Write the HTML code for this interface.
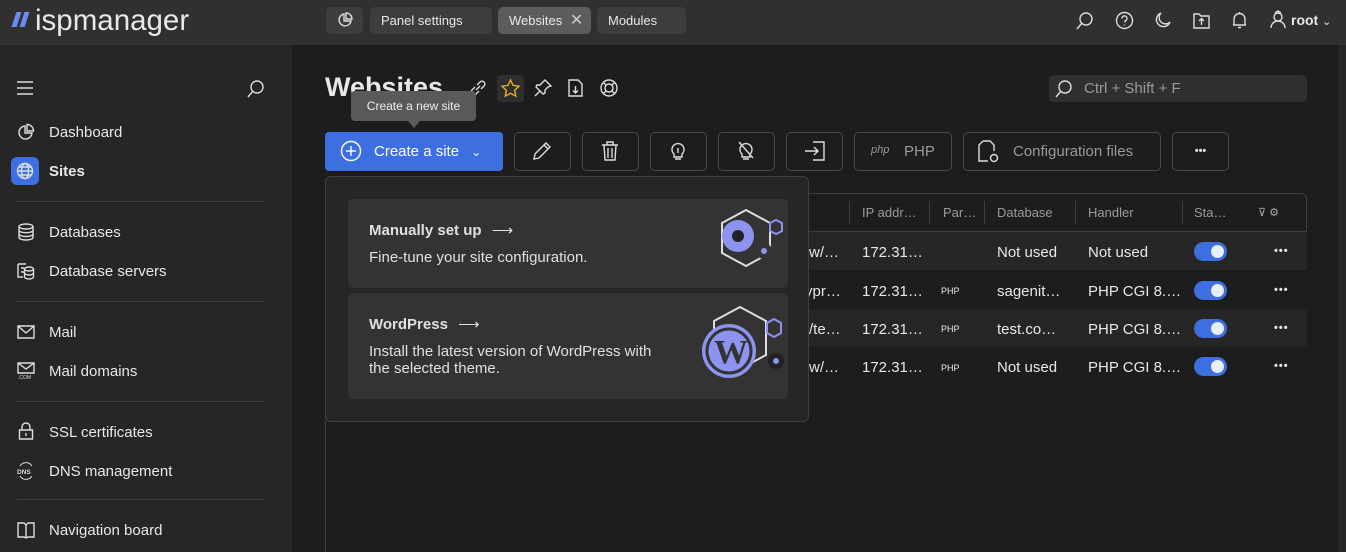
<!DOCTYPE html>
<html><head><meta charset="utf-8"><style>
*{box-sizing:border-box;margin:0;padding:0}
body{width:1346px;height:552px;overflow:hidden;background:#1d1d1d;font-family:"Liberation Sans",sans-serif;color:#e6e6e6;position:relative}
.abs{position:absolute}
.top{left:0;top:0;width:1346px;height:45px;background:#303030}
.tab{top:7px;height:27px;background:#3d3d3d;border-radius:5px;font-size:13px;line-height:27px;padding-left:11px;color:#e8e8e8}
.side{left:0;top:45px;width:292px;height:507px;background:#262626}
.nav{left:49px;font-size:15px;color:#e8e8e8}
.ic{left:17px;width:18px;height:18px}
.sep{left:17px;width:247px;height:1px;background:#3e3e3e}
.btn{top:132px;height:39px;border:1px solid #4a4a4a;border-radius:5px;color:#9a9a9a;font-size:15px;line-height:37px}
.row{left:326px;width:981px;height:38px}
.cell{font-size:15px;color:#e8e8e8}
.tog{width:33px;height:19px;border-radius:10px;background:#3d6fe0;left:1194px}
.tog:after{content:"";position:absolute;right:3px;top:3px;width:13px;height:13px;border-radius:50%;background:#e8eefc}
.dots{left:1274px;font-size:11px;letter-spacing:1px;font-weight:bold}
svg{position:absolute;fill:none;stroke:#ddd;stroke-width:1.4}
.sl{top:12px;width:5px;height:15px;background:#6a8cf5;transform:skewX(-18deg)}
</style></head><body>
<div class="abs top"></div>
<div class="abs sl" style="left:14px"></div>
<div class="abs sl" style="left:22px"></div>
<div class="abs" style="left:35px;top:4px;font-size:29.5px;color:#e8e8e8;">ispmanager</div>
<div class="abs tab" style="left:326px;width:37px;padding:0"></div>
<svg style="left:336px;top:11px" width="18" height="18" viewBox="0 0 18 18"><path d="M8 3a6 6 0 1 0 7 7H8z M10 2v6h6a6 6 0 0 0-6-6z"/></svg>
<div class="abs tab" style="left:370px;width:122px">Panel settings</div>
<div class="abs tab" style="left:498px;width:93px;background:#5c5c5c">Websites <span style="margin-left:4px;font-size:16px;color:#ccc">✕</span></div>
<div class="abs tab" style="left:597px;width:89px">Modules</div>
<svg style="left:1075px;top:11px" width="20" height="20" viewBox="0 0 20 20"><circle cx="11" cy="8" r="6"/><path d="M7 12l-5 6"/></svg>
<svg style="left:1115px;top:11px" width="19" height="19" viewBox="0 0 19 19"><circle cx="9.5" cy="9.5" r="8"/><path d="M7 7.5a2.5 2.5 0 1 1 3 2.4v1.6M9.5 13.5v1"/></svg>
<svg style="left:1153px;top:11px" width="19" height="19" viewBox="0 0 19 19"><path d="M8 2a7 7 0 1 0 9 9A6 6 0 0 1 8 2z"/></svg>
<svg style="left:1192px;top:10px" width="19" height="20" viewBox="0 0 19 20"><path d="M2 4h5l2 2h8v12H2z M9.5 15V9M7 11l2.5-2.5L12 11"/></svg>
<svg style="left:1230px;top:10px" width="19" height="20" viewBox="0 0 19 20"><path d="M4 15V9a5.5 5.5 0 0 1 11 0v6H3h13M8 17.5h3M9.5 2v1.5"/></svg>
<svg style="left:1269px;top:10px" width="18" height="20" viewBox="0 0 18 20"><circle cx="9" cy="7" r="4"/><path d="M2 18a7 7 0 0 1 14 0M6 3l3-2 3 2"/></svg>
<div class="abs" style="left:1291px;top:12px;font-size:14px;font-weight:bold">root <span style="font-weight:normal;font-size:11px">⌄</span></div>

<div class="abs side"></div>
<svg style="left:16px;top:80px" width="18" height="16" viewBox="0 0 18 16"><path d="M1 2h16M1 8h16M1 14h16"/></svg>
<svg style="left:246px;top:79px" width="20" height="20" viewBox="0 0 20 20"><circle cx="11" cy="8" r="6"/><path d="M7 12l-5 6"/></svg>
<svg class="ic" style="top:123px" viewBox="0 0 18 18"><path d="M8 3a6.5 6.5 0 1 0 7 7H8z M10 1.5v6.5h6.5a6.5 6.5 0 0 0-6.5-6.5z"/></svg>
<div class="abs nav" style="top:124px">Dashboard</div>
<div class="abs" style="left:11px;top:157px;width:28px;height:28px;border-radius:6px;background:#3d6fe0"></div>
<svg class="ic" style="left:16px;top:162px" viewBox="0 0 18 18"><circle cx="9" cy="9" r="7.5"/><ellipse cx="9" cy="9" rx="3.5" ry="7.5"/><path d="M1.5 9h15M3 5h12M3 13h12"/></svg>
<div class="abs nav" style="top:163px;font-weight:bold">Sites</div>
<div class="abs sep" style="top:201px"></div>
<svg class="ic" style="top:223px" viewBox="0 0 18 18"><ellipse cx="9" cy="3.5" rx="7" ry="2.5"/><path d="M2 3.5v11c0 1.4 3 2.5 7 2.5s7-1.1 7-2.5v-11M2 7.2c0 1.4 3 2.5 7 2.5s7-1.1 7-2.5M2 11c0 1.4 3 2.5 7 2.5s7-1.1 7-2.5"/></svg>
<div class="abs nav" style="top:224px">Databases</div>
<svg class="ic" style="top:262px" viewBox="0 0 18 18"><path d="M1 2h8M1 2v13h5M4 6h3M4 10h3"/><ellipse cx="12" cy="7" rx="4.5" ry="2"/><path d="M7.5 7v8c0 1 2 2 4.5 2s4.5-1 4.5-2V7M7.5 11c0 1 2 2 4.5 2s4.5-1 4.5-2"/></svg>
<div class="abs nav" style="top:263px">Database servers</div>
<div class="abs sep" style="top:301px"></div>
<svg class="ic" style="top:323px" viewBox="0 0 18 18"><path d="M1 3h16v12H1zM1 3l8 7 8-7"/></svg>
<div class="abs nav" style="top:324px">Mail</div>
<svg class="ic" style="top:362px" viewBox="0 0 18 18"><path d="M1 1h16v10H1zM1 1l8 6 8-6"/><text x="1" y="17" font-size="5" fill="#ddd" stroke="none" font-family="Liberation Sans">.COM</text></svg>
<div class="abs nav" style="top:363px">Mail domains</div>
<div class="abs sep" style="top:401px"></div>
<svg class="ic" style="top:422px" viewBox="0 0 18 18"><path d="M5 8V5a4 4 0 0 1 8 0v3M2.5 8h13v9h-13zM9 11v3"/></svg>
<div class="abs nav" style="top:424px">SSL certificates</div>
<svg class="ic" style="top:462px" viewBox="0 0 18 18"><text x="0" y="12" font-size="6.5" fill="#ddd" stroke="none" font-family="Liberation Sans" font-weight="bold">DNS</text><path d="M3 4a7 7 0 0 1 12 0M3 14a7 7 0 0 0 12 0" stroke-width="1"/></svg>
<div class="abs nav" style="top:463px">DNS management</div>
<div class="abs sep" style="top:499px"></div>
<svg class="ic" style="top:521px" viewBox="0 0 18 18"><path d="M1 2h6l2 2 2-2h6v14h-6l-2 1-2-1H1zM9 4v13"/></svg>
<div class="abs nav" style="top:522px">Navigation board</div>

<div class="abs" style="left:325px;top:72px;font-size:27px;font-weight:bold;color:#e8e8e8">Websites</div>
<svg style="left:468px;top:78px" width="20" height="20" viewBox="0 0 20 20"><path d="M8 12l4-4M7 9l-3 3a2.5 2.5 0 0 0 4 4l3-3M13 11l3-3a2.5 2.5 0 0 0-4-4l-3 3"/></svg>
<div class="abs" style="left:497px;top:75px;width:27px;height:27px;background:#2f2f2f;border-radius:4px"></div>
<svg style="left:500px;top:78px;stroke:#e8b020" width="21" height="21" viewBox="0 0 21 21"><path d="M10.5 2l2.6 5.4 5.9.8-4.3 4.1 1 5.8-5.2-2.8-5.2 2.8 1-5.8L2 8.2l5.9-.8z"/></svg>
<svg style="left:534px;top:79px" width="18" height="18" viewBox="0 0 18 18"><path d="M11 1l6 6-3 1-3 3 0 3-2 1-7-7 1-2h3l3-3zM6 12l-5 5"/></svg>
<svg style="left:567px;top:78px" width="17" height="20" viewBox="0 0 17 20"><path d="M2 2h9l4 4v12H2zM8.5 8v7M6 12.5l2.5 2.5 2.5-2.5"/></svg>
<svg style="left:599px;top:78px" width="20" height="20" viewBox="0 0 20 20"><circle cx="10" cy="10" r="8"/><circle cx="10" cy="10" r="4"/><path d="M4.5 4.5l2.7 2.7M15.5 4.5l-2.7 2.7M4.5 15.5l2.7-2.7M15.5 15.5l-2.7-2.7"/></svg>

<div class="abs" style="left:1049px;top:75px;width:258px;height:27px;background:#303030;border-radius:5px"></div>
<svg style="left:1054px;top:79px" width="20" height="20" viewBox="0 0 20 20"><circle cx="11" cy="8" r="6"/><path d="M7 12l-5 6"/></svg>
<div class="abs" style="left:1084px;top:80px;font-size:15px;color:#9a9a9a">Ctrl + Shift + F</div>

<div class="abs" style="left:325px;top:132px;width:178px;height:39px;background:#3d6fe0;border-radius:4px"></div>
<svg style="left:340px;top:140px;stroke:#fff" width="22" height="22" viewBox="0 0 22 22"><circle cx="11" cy="11" r="9.5"/><path d="M11 6v10M6 11h10"/></svg>
<div class="abs" style="left:374px;top:143px;font-size:15px;color:#fff">Create a site <span style="margin-left:8px;font-size:12px">⌄</span></div>
<div class="abs btn" style="left:514px;width:57px"></div>
<svg style="left:532px;top:141px" width="20" height="20" viewBox="0 0 20 20"><path d="M14 2l4 4L7 17l-5 1 1-5zM12 4l4 4"/></svg>
<div class="abs btn" style="left:582px;width:57px"></div>
<svg style="left:600px;top:140px" width="20" height="22" viewBox="0 0 20 22"><path d="M2 5h16M7 5V2h6v3M4 5l1 15h10l1-15M8 8v10M12 8v10"/></svg>
<div class="abs btn" style="left:650px;width:57px"></div>
<svg style="left:669px;top:140px" width="18" height="22" viewBox="0 0 18 22"><path d="M5 14a6 6 0 1 1 8 0v3H5zM6 19h6M9 8v5"/></svg>
<div class="abs btn" style="left:718px;width:57px"></div>
<svg style="left:737px;top:140px" width="18" height="22" viewBox="0 0 18 22"><path d="M5 14a6 6 0 1 1 8 0v3H5zM6 19h6M2 2l14 16"/></svg>
<div class="abs btn" style="left:786px;width:57px"></div>
<svg style="left:804px;top:140px" width="22" height="22" viewBox="0 0 22 22"><path d="M9 2h11v18H9M1 11h13M10 7l4 4-4 4"/></svg>
<div class="abs btn" style="left:854px;width:98px"></div>
<div class="abs" style="left:871px;top:144px;font-size:11px;font-style:italic;color:#999">php</div>
<div class="abs" style="left:904px;top:143px;font-size:15px;color:#9a9a9a">PHP</div>
<div class="abs btn" style="left:963px;width:198px"></div>
<svg style="left:978px;top:140px" width="22" height="24" viewBox="0 0 22 24"><path d="M5 1h7l4 4v6M5 1L1 5v16h9"/><circle cx="16" cy="18" r="3.5"/></svg>
<div class="abs" style="left:1013px;top:143px;font-size:15px;color:#9a9a9a">Configuration files</div>
<div class="abs btn" style="left:1172px;width:57px;color:#ddd;text-align:center;font-weight:bold;line-height:36px;font-size:11px">•••</div>

<div class="abs" style="left:326px;top:193px;width:981px;height:39px;border:1px solid #3e3e3e;border-radius:6px 6px 0 0"></div>
<div class="abs cell" style="left:862px;top:205px;font-size:13px;color:#9a9a9a">IP addr…</div>
<div class="abs cell" style="left:943px;top:205px;font-size:13px;color:#9a9a9a">Par…</div>
<div class="abs cell" style="left:997px;top:205px;font-size:13px;color:#9a9a9a">Database</div>
<div class="abs cell" style="left:1088px;top:205px;font-size:13px;color:#9a9a9a">Handler</div>
<div class="abs cell" style="left:1194px;top:205px;font-size:13px;color:#9a9a9a">Sta…</div>
<div class="abs" style="left:849px;top:201px;width:1px;height:23px;background:#3e3e3e"></div>
<div class="abs" style="left:929px;top:201px;width:1px;height:23px;background:#3e3e3e"></div>
<div class="abs" style="left:984px;top:201px;width:1px;height:23px;background:#3e3e3e"></div>
<div class="abs" style="left:1075px;top:201px;width:1px;height:23px;background:#3e3e3e"></div>
<div class="abs" style="left:1182px;top:201px;width:1px;height:23px;background:#3e3e3e"></div>
<div class="abs" style="left:1258px;top:206px;font-size:11px;color:#aaa">⊽ ⚙</div>

<div class="abs row" style="top:232px;background:#262626"></div>
<div class="abs row" style="top:309px;background:#262626"></div>
<div class="abs cell" style="left:809px;top:244px">w/…</div><div class="abs cell" style="left:862px;top:244px">172.31…</div><div class="abs cell" style="left:997px;top:244px">Not used</div><div class="abs cell" style="left:1088px;top:244px">Not used</div><div class="abs tog" style="top:242px"></div><div class="abs dots" style="top:245px">•••</div>
<div class="abs cell" style="left:805px;top:283px">ypr…</div><div class="abs cell" style="left:862px;top:283px">172.31…</div><div class="abs cell" style="left:941px;top:286px;font-size:9px">PHP</div><div class="abs cell" style="left:997px;top:283px">sagenit…</div><div class="abs cell" style="left:1088px;top:283px">PHP CGI 8.…</div><div class="abs tog" style="top:281px"></div><div class="abs dots" style="top:284px">•••</div>
<div class="abs cell" style="left:809px;top:321px">/te…</div><div class="abs cell" style="left:862px;top:321px">172.31…</div><div class="abs cell" style="left:941px;top:324px;font-size:9px">PHP</div><div class="abs cell" style="left:997px;top:321px">test.co…</div><div class="abs cell" style="left:1088px;top:321px">PHP CGI 8.…</div><div class="abs tog" style="top:319px"></div><div class="abs dots" style="top:322px">•••</div>
<div class="abs cell" style="left:809px;top:359px">w/…</div><div class="abs cell" style="left:862px;top:359px">172.31…</div><div class="abs cell" style="left:941px;top:363px;font-size:9px">PHP</div><div class="abs cell" style="left:997px;top:359px">Not used</div><div class="abs cell" style="left:1088px;top:359px">PHP CGI 8.…</div><div class="abs tog" style="top:357px"></div><div class="abs dots" style="top:360px">•••</div>

<div class="abs" style="left:325px;top:420px;width:1px;height:132px;background:#3e3e3e"></div>
<div class="abs" style="left:325px;top:176px;width:484px;height:246px;background:#262626;border:1px solid #404040;border-radius:6px"></div>
<div class="abs" style="left:348px;top:199px;width:440px;height:89px;background:#333;border-radius:5px"></div>
<div class="abs" style="left:369px;top:221px;font-size:15px;font-weight:bold;color:#e0e0e0">Manually set up <span style="font-weight:normal;margin-left:6px">⟶</span></div>
<div class="abs" style="left:369px;top:249px;font-size:15px;color:#e0e0e0">Fine-tune your site configuration.</div>
<svg style="left:716px;top:208px;stroke:#ddd;stroke-width:2" width="72" height="72" viewBox="0 0 72 72"><path d="M30 2l24 13v30L30 58 6 45V15z"/><circle cx="22" cy="28" r="16" fill="#8d94ef" stroke="none"/><circle cx="22" cy="28" r="6" fill="#222" stroke="none"/><circle cx="48" cy="43" r="8" fill="#333" stroke="none"/><circle cx="48" cy="43" r="3" fill="#8d94ef" stroke="none"/><path d="M60 12l6 3v8l-6 3-6-3v-8z" stroke="#8d94ef"/></svg>
<div class="abs" style="left:348px;top:293px;width:440px;height:106px;background:#333;border-radius:5px"></div>
<div class="abs" style="left:369px;top:315px;font-size:15px;font-weight:bold;color:#e0e0e0">WordPress <span style="font-weight:normal;margin-left:6px">⟶</span></div>
<div class="abs" style="left:369px;top:343px;font-size:15px;line-height:17px;color:#e0e0e0">Install the latest version of WordPress with<br>the selected theme.</div>
<svg style="left:700px;top:305px;stroke:#ddd;stroke-width:2" width="88" height="82" viewBox="0 0 88 82"><path d="M40 2l26 14v34L40 64 14 50V16z"/><circle cx="29" cy="46" r="27" fill="#8d94ef" stroke="none"/><circle cx="29" cy="46" r="22" fill="none" stroke="#333" stroke-width="3"/><text x="14" y="58" font-size="34" font-family="Liberation Serif" fill="#333" stroke="none" font-weight="bold">W</text><circle cx="76" cy="56" r="8" fill="#222" stroke="none"/><circle cx="76" cy="56" r="3" fill="#8d94ef" stroke="none"/><path d="M74 14l7 4v10l-7 4-7-4V18z" stroke="#8d94ef"/></svg>

<div class="abs" style="left:351px;top:91px;width:125px;height:30px;background:#5a5a5a;border-radius:4px;font-size:12px;color:#eee;text-align:center;line-height:30px">Create a new site</div>
<div class="abs" style="left:408px;top:121px;width:0;height:0;border-left:6px solid transparent;border-right:6px solid transparent;border-top:7px solid #5a5a5a"></div>
<div class="abs" style="left:1338px;top:45px;width:8px;height:507px;background:#262626"></div>
</body></html>
